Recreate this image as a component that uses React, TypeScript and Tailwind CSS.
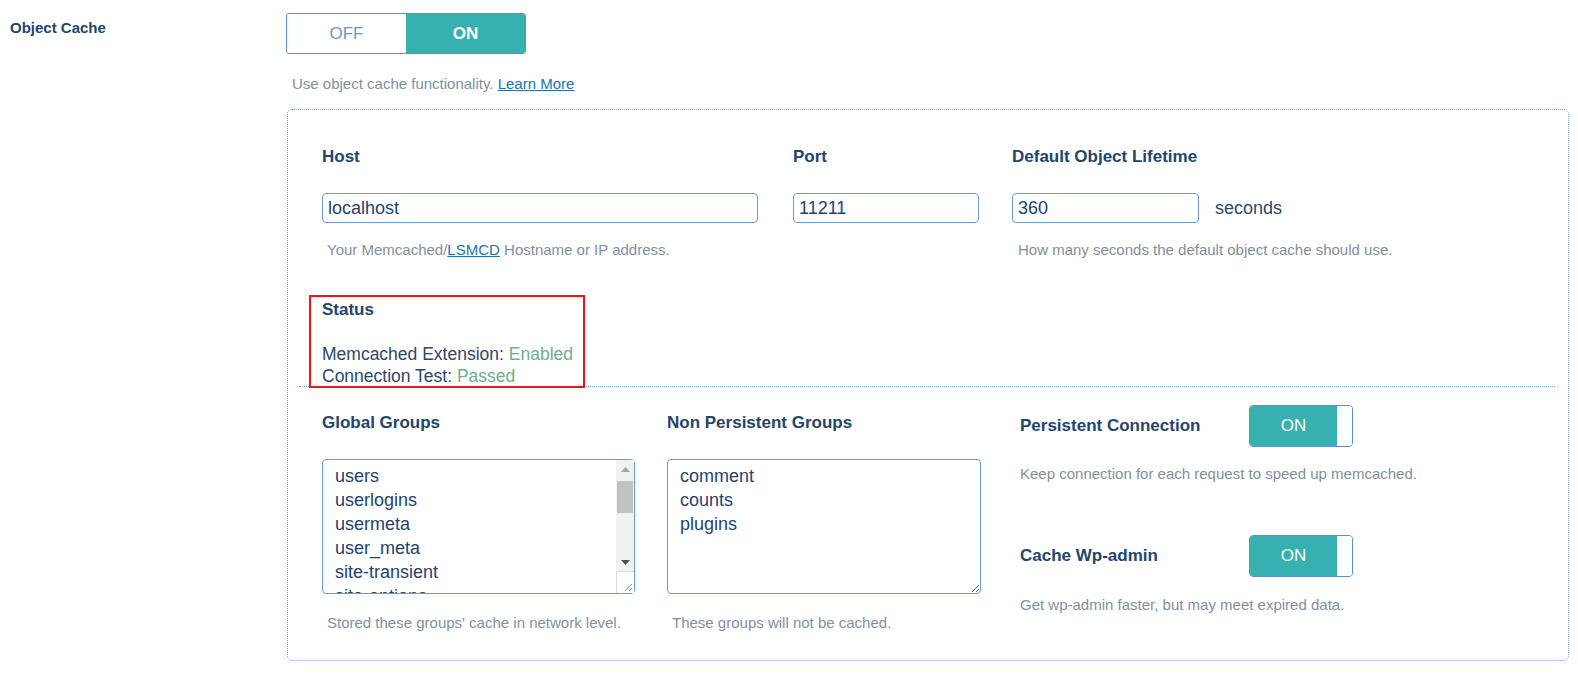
import React from 'react';

const label = 'text-[17px] font-bold leading-6 text-[#22456d]';
const help = 'text-[15px] leading-5 text-[#838f9c]';
const field =
  'block h-[30px] rounded-[4px] border border-[#6c9bd2] bg-white px-[5px] text-[18px] text-[#26426a] outline-none';
const area =
  'block h-[135px] rounded-[4px] border border-[#6c9bd2] bg-white pb-[3px] pt-[4px] pl-[12px] text-[18px] leading-6 text-[#26426a] outline-none';

function SmallToggle() {
  return (
    <div className="flex h-[42px] w-[104px] overflow-hidden rounded-[4px] border border-[#5b8fd0]">
      <div className="flex flex-1 items-center justify-center bg-[#36b0b0] text-[17px] text-white">ON</div>
      <div className="w-[15px] bg-white" />
    </div>
  );
}

// fake classic scrollbar + resize corner drawn over the global groups textarea
function ScrollbarOverlay() {
  return (
    <div className="pointer-events-none absolute right-[1px] top-[1px] flex w-[18px] flex-col">
      <div className="flex h-[111px] flex-col bg-[#f1f1f1]">
        <div className="flex h-[18px] items-center justify-center">
          <svg width="9" height="5" viewBox="0 0 9 5"><path d="M0 5 L4.5 0 L9 5 Z" fill="#a3a3a3" /></svg>
        </div>
        <div className="mx-[1px] mt-[3px] h-[32px] bg-[#c1c1c1]" />
        <div className="flex-1" />
        <div className="flex h-[18px] items-center justify-center">
          <svg width="9" height="5" viewBox="0 0 9 5"><path d="M0 0 L9 0 L4.5 5 Z" fill="#505050" /></svg>
        </div>
      </div>
      <div className="relative h-[22px] border-l border-t border-[#dcdcdc] bg-white">
        <svg className="absolute bottom-[1px] right-[1px]" width="10" height="10" viewBox="0 0 10 10">
          <path d="M9 2 L2 9 M9 6 L6 9" stroke="#8a8a8a" strokeWidth="1" />
        </svg>
      </div>
    </div>
  );
}

export default function App() {
  const globalGroups = ['users', 'userlogins', 'usermeta', 'user_meta', 'site-transient', 'site-options', 'site-lookup', 'blog-lookup', 'blog-details', 'rss', 'global-posts'];
  const nonPersistent = ['comment', 'counts', 'plugins'];

  return (
    <div className="flex h-[674px] overflow-hidden bg-white pt-[13px] font-['Liberation_Sans',Arial,sans-serif]">
      <div className="w-[286px] shrink-0 pl-[10px] pt-[5px]">
        <div className="text-[15px] font-bold leading-5 text-[#22456d]">Object Cache</div>
      </div>

      <div className="w-[1283px] shrink-0">
        <div className="flex h-[41px] w-[240px] overflow-hidden rounded-[3px] border border-[#5b8fd0]">
          <div className="flex flex-1 items-center justify-center bg-white text-[17px] text-[#6f95cc]">OFF</div>
          <div className="flex flex-1 items-center justify-center bg-[#36b0b0] text-[17px] font-bold text-white">ON</div>
        </div>

        <p className={`${help} mt-[20px] pl-[6px]`}>
          Use object cache functionality.{' '}
          <a href="#" className="text-[#2271b1] underline">Learn More</a>
        </p>

        <div className="ml-[1px] mt-[15px] w-[1282px] rounded-[5px] border border-dotted border-[#7ba4d8] pb-[27px] pt-[35px]">
          {/* connection settings */}
          <div className="flex pl-[34px]">
            <div className="w-[436px]">
              <div className={label}>Host</div>
              <input className={`${field} mt-[24px] w-[436px]`} defaultValue="localhost" />
              <p className={`${help} mt-[17px] pl-[5px]`}>
                Your Memcached/<a href="#" className="text-[#2271b1] underline">LSMCD</a> Hostname or IP address.
              </p>
            </div>
            <div className="ml-[35px] w-[186px]">
              <div className={label}>Port</div>
              <input className={`${field} mt-[24px] w-[186px]`} defaultValue="11211" />
            </div>
            <div className="ml-[33px]">
              <div className={label}>Default Object Lifetime</div>
              <div className="mt-[24px] flex items-center">
                <input className={`${field} w-[187px]`} defaultValue="360" />
                <span className="ml-[16px] text-[18px] text-[#2d4867]">seconds</span>
              </div>
              <p className={`${help} mt-[17px] pl-[6px]`}>How many seconds the default object cache should use.</p>
            </div>
          </div>

          {/* status */}
          <div className="mt-[38px] pl-[34px]">
            <div className="relative inline-block align-top">
              <div className={label}>Status</div>
              <div className="mt-[21px] text-[17.5px] leading-[22px] text-[#2d4867]">
                <div>Memcached Extension: <span className="text-[#6ab187]">Enabled</span></div>
                <div>Connection Test: <span className="text-[#6ab187]">Passed</span></div>
              </div>
              <div className="pointer-events-none absolute -left-[13px] -top-[3px] z-10 h-[93px] w-[276px] border-2 border-[#e8161e]" />
            </div>
          </div>
          <div className="-mt-[1px] ml-[11px] mr-[13px] border-t border-dotted border-[#7ba4d8]" />

          {/* groups */}
          <div className="flex pl-[34px]">
            <div className="w-[313px] pt-[24px]">
              <div className={label}>Global Groups</div>
              <div className="relative mt-[24px]">
                <textarea
                  className={`${area} w-[313px] resize-none overflow-hidden pr-[22px]`}
                  defaultValue={globalGroups.join('\n')}
                />
                <ScrollbarOverlay />
              </div>
              <p className={`${help} mt-[19px] pl-[5px]`}>Stored these groups' cache in network level.</p>
            </div>
            <div className="ml-[32px] w-[314px] pt-[24px]">
              <div className={label}>Non Persistent Groups</div>
              <textarea className={`${area} mt-[24px] w-[314px]`} defaultValue={nonPersistent.join('\n')} />
              <p className={`${help} mt-[19px] pl-[5px]`}>These groups will not be cached.</p>
            </div>
            <div className="ml-[39px] pt-[18px]">
              <div className="flex items-center">
                <div className={`${label} w-[229px]`}>Persistent Connection</div>
                <SmallToggle />
              </div>
              <p className={`${help} mt-[17px]`}>Keep connection for each request to speed up memcached.</p>
              <div className="mt-[51px] flex items-center">
                <div className={`${label} w-[229px]`}>Cache Wp-admin</div>
                <SmallToggle />
              </div>
              <p className={`${help} mt-[18px]`}>Get wp-admin faster, but may meet expired data.</p>
            </div>
          </div>
        </div>
      </div>
    </div>
  );
}
